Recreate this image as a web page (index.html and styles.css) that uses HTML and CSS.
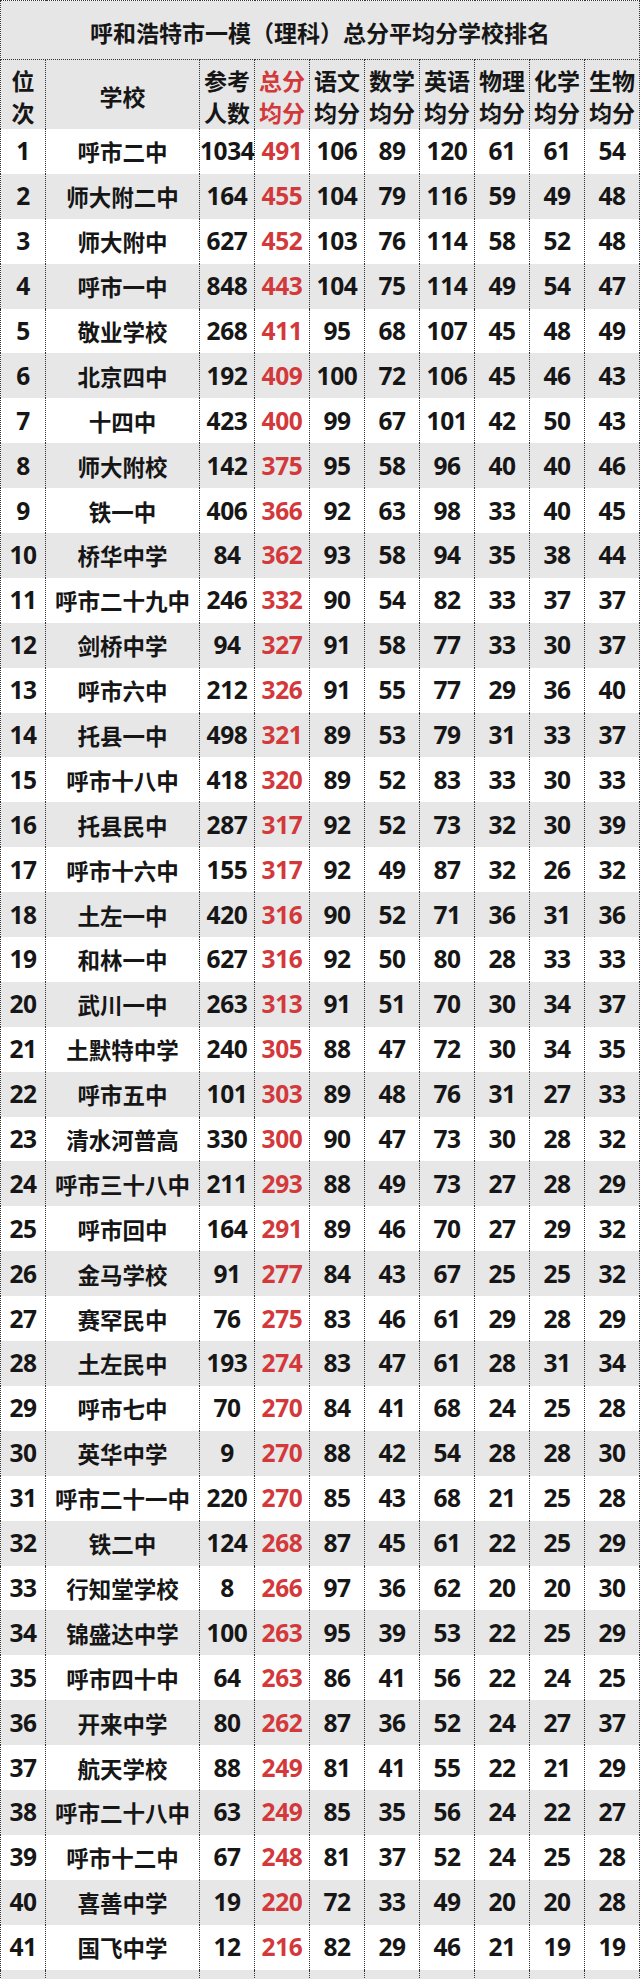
FILE: index.html
```html
<!DOCTYPE html>
<html lang="zh-CN">
<head>
<meta charset="utf-8">
<title>呼和浩特市一模（理科）总分平均分学校排名</title>
<link rel="stylesheet" href="styles.css">
</head>
<body>
<div class="sheet">
<table class="rank">
<colgroup>
<col class="c-rank"><col class="c-school"><col class="c-num"><col class="c-num"><col class="c-num"><col class="c-num"><col class="c-num"><col class="c-num"><col class="c-num"><col class="c-num">
</colgroup>
<thead>
<tr class="title-row"><th colspan="10">呼和浩特市一模（理科）总分平均分学校排名</th></tr>
<tr class="head-row">
<th>位<br>次</th><th>学校</th><th>参考<br>人数</th><th class="red">总分<br>均分</th><th>语文<br>均分</th><th>数学<br>均分</th><th>英语<br>均分</th><th>物理<br>均分</th><th>化学<br>均分</th><th>生物<br>均分</th>
</tr>
</thead>
<tbody>
<tr><td>1</td><td>呼市二中</td><td>1034</td><td class="red">491</td><td>106</td><td>89</td><td>120</td><td>61</td><td>61</td><td>54</td></tr>
<tr><td>2</td><td>师大附二中</td><td>164</td><td class="red">455</td><td>104</td><td>79</td><td>116</td><td>59</td><td>49</td><td>48</td></tr>
<tr><td>3</td><td>师大附中</td><td>627</td><td class="red">452</td><td>103</td><td>76</td><td>114</td><td>58</td><td>52</td><td>48</td></tr>
<tr><td>4</td><td>呼市一中</td><td>848</td><td class="red">443</td><td>104</td><td>75</td><td>114</td><td>49</td><td>54</td><td>47</td></tr>
<tr><td>5</td><td>敬业学校</td><td>268</td><td class="red">411</td><td>95</td><td>68</td><td>107</td><td>45</td><td>48</td><td>49</td></tr>
<tr><td>6</td><td>北京四中</td><td>192</td><td class="red">409</td><td>100</td><td>72</td><td>106</td><td>45</td><td>46</td><td>43</td></tr>
<tr><td>7</td><td>十四中</td><td>423</td><td class="red">400</td><td>99</td><td>67</td><td>101</td><td>42</td><td>50</td><td>43</td></tr>
<tr><td>8</td><td>师大附校</td><td>142</td><td class="red">375</td><td>95</td><td>58</td><td>96</td><td>40</td><td>40</td><td>46</td></tr>
<tr><td>9</td><td>铁一中</td><td>406</td><td class="red">366</td><td>92</td><td>63</td><td>98</td><td>33</td><td>40</td><td>45</td></tr>
<tr><td>10</td><td>桥华中学</td><td>84</td><td class="red">362</td><td>93</td><td>58</td><td>94</td><td>35</td><td>38</td><td>44</td></tr>
<tr><td>11</td><td>呼市二十九中</td><td>246</td><td class="red">332</td><td>90</td><td>54</td><td>82</td><td>33</td><td>37</td><td>37</td></tr>
<tr><td>12</td><td>剑桥中学</td><td>94</td><td class="red">327</td><td>91</td><td>58</td><td>77</td><td>33</td><td>30</td><td>37</td></tr>
<tr><td>13</td><td>呼市六中</td><td>212</td><td class="red">326</td><td>91</td><td>55</td><td>77</td><td>29</td><td>36</td><td>40</td></tr>
<tr><td>14</td><td>托县一中</td><td>498</td><td class="red">321</td><td>89</td><td>53</td><td>79</td><td>31</td><td>33</td><td>37</td></tr>
<tr><td>15</td><td>呼市十八中</td><td>418</td><td class="red">320</td><td>89</td><td>52</td><td>83</td><td>33</td><td>30</td><td>33</td></tr>
<tr><td>16</td><td>托县民中</td><td>287</td><td class="red">317</td><td>92</td><td>52</td><td>73</td><td>32</td><td>30</td><td>39</td></tr>
<tr><td>17</td><td>呼市十六中</td><td>155</td><td class="red">317</td><td>92</td><td>49</td><td>87</td><td>32</td><td>26</td><td>32</td></tr>
<tr><td>18</td><td>土左一中</td><td>420</td><td class="red">316</td><td>90</td><td>52</td><td>71</td><td>36</td><td>31</td><td>36</td></tr>
<tr><td>19</td><td>和林一中</td><td>627</td><td class="red">316</td><td>92</td><td>50</td><td>80</td><td>28</td><td>33</td><td>33</td></tr>
<tr><td>20</td><td>武川一中</td><td>263</td><td class="red">313</td><td>91</td><td>51</td><td>70</td><td>30</td><td>34</td><td>37</td></tr>
<tr><td>21</td><td>土默特中学</td><td>240</td><td class="red">305</td><td>88</td><td>47</td><td>72</td><td>30</td><td>34</td><td>35</td></tr>
<tr><td>22</td><td>呼市五中</td><td>101</td><td class="red">303</td><td>89</td><td>48</td><td>76</td><td>31</td><td>27</td><td>33</td></tr>
<tr><td>23</td><td>清水河普高</td><td>330</td><td class="red">300</td><td>90</td><td>47</td><td>73</td><td>30</td><td>28</td><td>32</td></tr>
<tr><td>24</td><td>呼市三十八中</td><td>211</td><td class="red">293</td><td>88</td><td>49</td><td>73</td><td>27</td><td>28</td><td>29</td></tr>
<tr><td>25</td><td>呼市回中</td><td>164</td><td class="red">291</td><td>89</td><td>46</td><td>70</td><td>27</td><td>29</td><td>32</td></tr>
<tr><td>26</td><td>金马学校</td><td>91</td><td class="red">277</td><td>84</td><td>43</td><td>67</td><td>25</td><td>25</td><td>32</td></tr>
<tr><td>27</td><td>赛罕民中</td><td>76</td><td class="red">275</td><td>83</td><td>46</td><td>61</td><td>29</td><td>28</td><td>29</td></tr>
<tr><td>28</td><td>土左民中</td><td>193</td><td class="red">274</td><td>83</td><td>47</td><td>61</td><td>28</td><td>31</td><td>34</td></tr>
<tr><td>29</td><td>呼市七中</td><td>70</td><td class="red">270</td><td>84</td><td>41</td><td>68</td><td>24</td><td>25</td><td>28</td></tr>
<tr><td>30</td><td>英华中学</td><td>9</td><td class="red">270</td><td>88</td><td>42</td><td>54</td><td>28</td><td>28</td><td>30</td></tr>
<tr><td>31</td><td>呼市二十一中</td><td>220</td><td class="red">270</td><td>85</td><td>43</td><td>68</td><td>21</td><td>25</td><td>28</td></tr>
<tr><td>32</td><td>铁二中</td><td>124</td><td class="red">268</td><td>87</td><td>45</td><td>61</td><td>22</td><td>25</td><td>29</td></tr>
<tr><td>33</td><td>行知堂学校</td><td>8</td><td class="red">266</td><td>97</td><td>36</td><td>62</td><td>20</td><td>20</td><td>30</td></tr>
<tr><td>34</td><td>锦盛达中学</td><td>100</td><td class="red">263</td><td>95</td><td>39</td><td>53</td><td>22</td><td>25</td><td>29</td></tr>
<tr><td>35</td><td>呼市四十中</td><td>64</td><td class="red">263</td><td>86</td><td>41</td><td>56</td><td>22</td><td>24</td><td>25</td></tr>
<tr><td>36</td><td>开来中学</td><td>80</td><td class="red">262</td><td>87</td><td>36</td><td>52</td><td>24</td><td>27</td><td>37</td></tr>
<tr><td>37</td><td>航天学校</td><td>88</td><td class="red">249</td><td>81</td><td>41</td><td>55</td><td>22</td><td>21</td><td>29</td></tr>
<tr><td>38</td><td>呼市二十八中</td><td>63</td><td class="red">249</td><td>85</td><td>35</td><td>56</td><td>24</td><td>22</td><td>27</td></tr>
<tr><td>39</td><td>呼市十二中</td><td>67</td><td class="red">248</td><td>81</td><td>37</td><td>52</td><td>24</td><td>25</td><td>28</td></tr>
<tr><td>40</td><td>喜善中学</td><td>19</td><td class="red">220</td><td>72</td><td>33</td><td>49</td><td>20</td><td>20</td><td>28</td></tr>
<tr><td>41</td><td>国飞中学</td><td>12</td><td class="red">216</td><td>82</td><td>29</td><td>46</td><td>21</td><td>19</td><td>19</td></tr>
<tr><td></td><td></td><td></td><td></td><td></td><td></td><td></td><td></td><td></td><td></td></tr>
</tbody>
</table>
</div>
</body>
</html>
```
FILE: styles.css
```css
html, body {
  margin: 0;
  padding: 0;
  background: #ffffff;
}

.sheet {
  width: 640px;
  overflow: hidden;
}

.rank {
  width: 640px;
  table-layout: fixed;
  border-collapse: collapse;
  font-family: "Open Sans", "Noto Sans CJK SC", sans-serif;
  font-weight: 700;
  color: #161616;
}

.c-rank { width: 45px; }
.c-school { width: 154px; }
.c-num { width: 55px; }

.rank th,
.rank td {
  padding: 0;
  text-align: center;
  vertical-align: middle;
  border-left: 1px dotted #333;
  border-right: 1px dotted #333;
  white-space: nowrap;
  overflow: visible;
}

.title-row th {
  height: 55px;
  background: #e6e6e6;
  font-family: "Noto Sans CJK SC", sans-serif;
  font-size: 23px;
  line-height: 30px;
  padding-top: 3px;
  border-top: 1px dotted #333;
  border-bottom: 1px dotted #333;
}

.head-row th {
  height: 67px;
  background: #e6e6e6;
  font-family: "Noto Sans CJK SC", sans-serif;
  font-size: 23px;
  line-height: 32px;
  padding-top: 2px;
}

.rank td {
  height: 44.9px;
  font-size: 24.5px;
  line-height: 30px;
  letter-spacing: -0.4px;
}

.rank td:nth-child(2) {
  font-family: "Noto Sans CJK SC", sans-serif;
  font-size: 22.5px;
  letter-spacing: 0;
}

.rank tbody tr:nth-child(even) td {
  background: #e7e7e7;
}

.red {
  color: #d3383b;
}
```
